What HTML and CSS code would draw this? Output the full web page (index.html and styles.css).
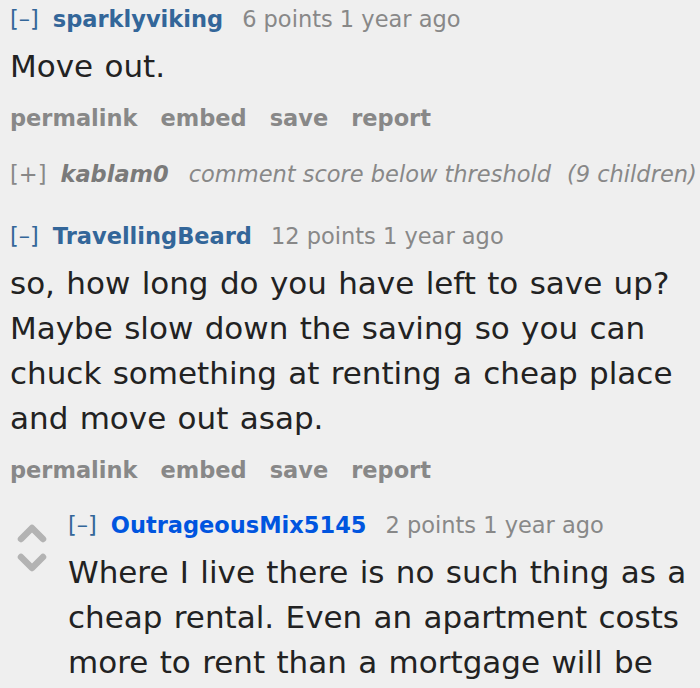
FILE: index.html
```html
<!DOCTYPE html>
<html lang="en">
<head>
    <meta charset="UTF-8">
    <meta name="viewport" content="width=device-width, initial-scale=1.0">
    <title>comments</title>
    <link rel="stylesheet" href="styles.css">
</head>
<body>
    <div class="commentarea">
        <div class="comment">
            <p class="tagline">
                <a class="expand">[–]</a><a class="author">sparklyviking</a><span class="score">6 points 1 year ago</span>
            </p>
            <div class="md"><p>Move out.</p></div>
            <ul class="buttons">
                <li>permalink</li>
                <li>embed</li>
                <li>save</li>
                <li>report</li>
            </ul>
        </div>

        <div class="comment collapsed">
            <p class="tagline">
                <a class="expand">[+]</a><span class="author">kablam0</span><span class="note">comment score below threshold</span><span class="children">(9 children)</span>
            </p>
        </div>

        <div class="comment">
            <p class="tagline">
                <a class="expand">[–]</a><a class="author">TravellingBeard</a><span class="score">12 points 1 year ago</span>
            </p>
            <div class="md">
                <p>so, how long do you have left to save up? Maybe slow down the saving so you can chuck something at renting a cheap place and move out asap.</p>
            </div>
            <ul class="buttons">
                <li>permalink</li>
                <li>embed</li>
                <li>save</li>
                <li>report</li>
            </ul>

            <div class="child">
                <div class="comment voted">
                    <div class="midcol">
                        <svg class="arrow" viewBox="0 0 30 20" width="30" height="20">
                            <polyline points="4,16 15,5 26,16" />
                        </svg>
                        <svg class="arrow" viewBox="0 0 30 20" width="30" height="20">
                            <polyline points="4,4 15,15 26,4" />
                        </svg>
                    </div>
                    <div class="entry">
                        <p class="tagline">
                            <a class="expand">[–]</a><a class="author submitter">OutrageousMix5145</a><span class="score">2 points 1 year ago</span>
                        </p>
                        <div class="md">
                            <p>Where I live there is no such thing as a cheap rental. Even an apartment costs more to rent than a mortgage will be</p>
                        </div>
                    </div>
                </div>
            </div>
        </div>
    </div>
</body>
</html>
```

FILE: styles.css
```css
* {
    margin: 0;
    padding: 0;
    box-sizing: border-box;
}

body {
    font-family: "DejaVu Sans", Verdana, sans-serif;
    background: #efefef;
    color: #222;
    overflow: hidden;
}

.commentarea {
    padding: 4px 0 0 10px;
}

.tagline {
    font-size: 22.5px;
    line-height: 30px;
    color: #888;
    white-space: nowrap;
}

.expand {
    color: #369;
    margin-right: 14px;
}

.author {
    color: #369;
    font-weight: bold;
    margin-right: 19px;
}

.author.submitter {
    color: #0055df;
}

.md {
    margin-top: 10px;
    font-size: 31px;
    line-height: 45px;
    word-spacing: 1.5px;
    color: #222;
}

.buttons {
    list-style: none;
    display: flex;
    gap: 23px;
    margin-top: 14px;
    font-size: 22.5px;
    line-height: 30px;
    font-weight: bold;
    color: #888;
}

.comment + .comment {
    margin-top: 26px;
}

.collapsed .tagline {
    font-style: italic;
}

.collapsed .expand {
    color: #888;
    font-style: normal;
    margin-right: 14px;
}

.collapsed .author {
    color: #7a7a7a;
    margin-right: 20px;
}

.collapsed .note {
    margin-right: 16px;
}

.collapsed + .comment {
    margin-top: 32px;
}

.child {
    margin-top: 25px;
}

.voted {
    display: flex;
}

.midcol {
    width: 40px;
    padding: 13px 0 0 7px;
    display: flex;
    flex-direction: column;
    gap: 10px;
}

.arrow polyline {
    fill: none;
    stroke: #b3b3b3;
    stroke-width: 6.5;
    stroke-linecap: round;
    stroke-linejoin: round;
}

.entry {
    margin-left: 18px;
    flex: 1;
}
```
